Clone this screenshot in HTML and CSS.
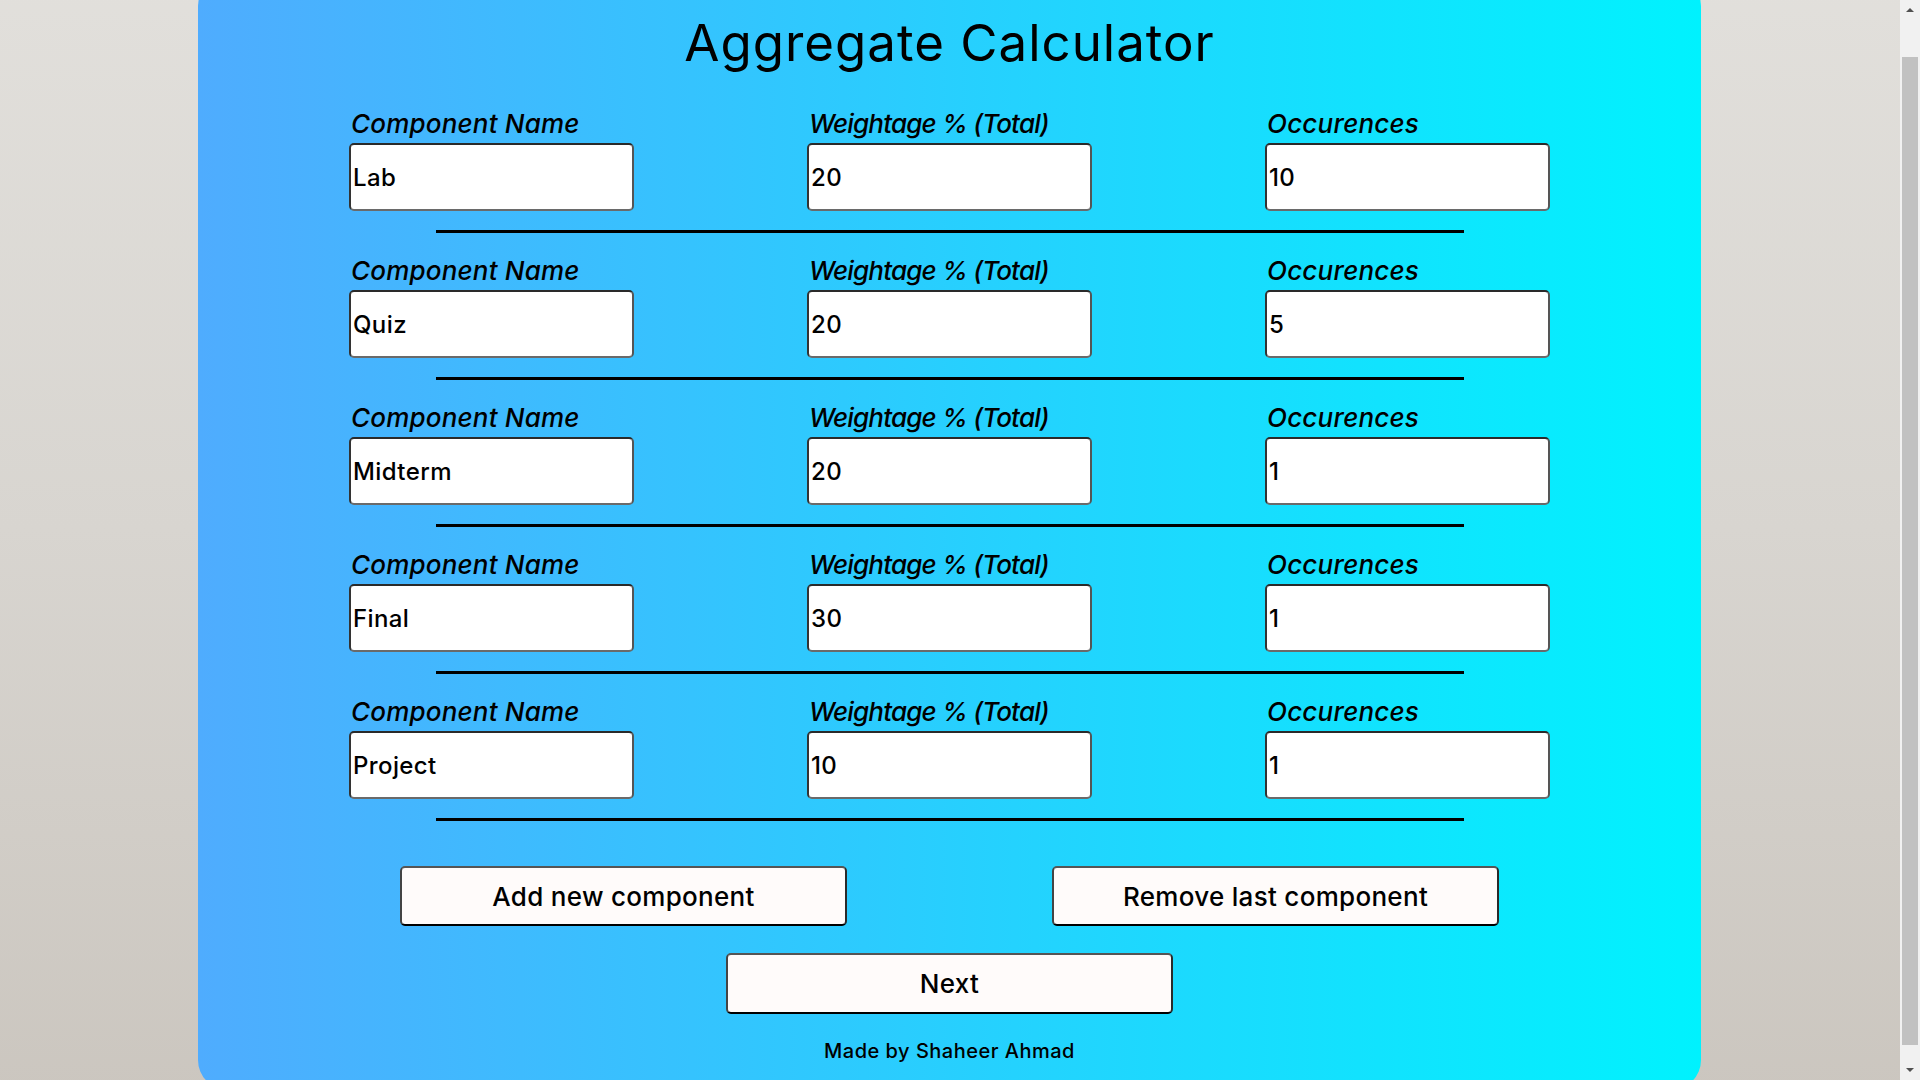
FILE: index.html
```html
<!DOCTYPE html>
<html lang="en">
<head>
<meta charset="utf-8">
<title>Aggregate Calculator</title>
<link rel="stylesheet" href="styles.css">
</head>
<body>
<main class="card">
  <h1 class="title">Aggregate Calculator</h1>

  <section class="component">
    <div class="fields">
      <div class="field"><label class="label">Component Name</label><input class="input" type="text" value="Lab"></div>
      <div class="field"><label class="label label-tight">Weightage % (Total)</label><input class="input" type="text" value="20"></div>
      <div class="field"><label class="label">Occurences</label><input class="input" type="text" value="10"></div>
    </div>
    <hr class="sep">
  </section>

  <section class="component">
    <div class="fields">
      <div class="field"><label class="label">Component Name</label><input class="input" type="text" value="Quiz"></div>
      <div class="field"><label class="label label-tight">Weightage % (Total)</label><input class="input" type="text" value="20"></div>
      <div class="field"><label class="label">Occurences</label><input class="input" type="text" value="5"></div>
    </div>
    <hr class="sep">
  </section>

  <section class="component">
    <div class="fields">
      <div class="field"><label class="label">Component Name</label><input class="input" type="text" value="Midterm"></div>
      <div class="field"><label class="label label-tight">Weightage % (Total)</label><input class="input" type="text" value="20"></div>
      <div class="field"><label class="label">Occurences</label><input class="input" type="text" value="1"></div>
    </div>
    <hr class="sep">
  </section>

  <section class="component">
    <div class="fields">
      <div class="field"><label class="label">Component Name</label><input class="input" type="text" value="Final"></div>
      <div class="field"><label class="label label-tight">Weightage % (Total)</label><input class="input" type="text" value="30"></div>
      <div class="field"><label class="label">Occurences</label><input class="input" type="text" value="1"></div>
    </div>
    <hr class="sep">
  </section>

  <section class="component">
    <div class="fields">
      <div class="field"><label class="label">Component Name</label><input class="input" type="text" value="Project"></div>
      <div class="field"><label class="label label-tight">Weightage % (Total)</label><input class="input" type="text" value="10"></div>
      <div class="field"><label class="label">Occurences</label><input class="input" type="text" value="1"></div>
    </div>
    <hr class="sep">
  </section>

  <div class="actions">
    <button class="btn" type="button">Add new component</button>
    <button class="btn" type="button">Remove last component</button>
  </div>
  <div class="next-row">
    <button class="btn btn-next" type="button">Next</button>
  </div>
  <p class="footer">Made by Shaheer Ahmad</p>
</main>

<div class="scrollbar" aria-hidden="true">
  <span class="sb-arrow sb-up"></span>
  <span class="sb-thumb"></span>
  <span class="sb-arrow sb-down"></span>
</div>
<script src="script.js"></script>
</body>
</html>
```

FILE: styles.css
```css
html {
  background: linear-gradient(to bottom, #e2e0dc 0%, #d8d5d0 50%, #cbc6bf 100%);
  min-height: 100%;
}

body {
  margin: 0;
  font-family: "Inter", "Lato", "Liberation Sans", sans-serif;
  color: #000;
}

.card {
  width: 1503px;
  margin: 20px 0 10px 198px;
  box-sizing: border-box;
  padding: 36px 0 27px;
  background: linear-gradient(to right, #4facfe 0%, #00f2fe 100%);
  border-radius: 30px;
}

.title {
  margin: 0 0 35px;
  text-align: center;
  font-size: 51px;
  line-height: 62px;
  font-weight: 400;
  letter-spacing: 1px;
}

.fields {
  display: grid;
  grid-template-columns: repeat(3, 458px);
  justify-content: center;
}

.field {
  width: 285px;
  justify-self: center;
  display: flex;
  flex-direction: column;
}

.label {
  display: block;
  font-size: 26px;
  line-height: 30px;
  font-style: italic;
  font-weight: 500;
  letter-spacing: 0.2px;
  margin-left: 2px;
  white-space: nowrap;
}

.label-tight {
  letter-spacing: -0.8px;
}

.input {
  margin-top: 4px;
  box-sizing: border-box;
  width: 285px;
  height: 68px;
  padding: 0 2px;
  font-family: inherit;
  font-size: 24px;
  font-weight: 500;
  letter-spacing: 0.4px;
  color: #000;
  background: #fff;
  border: 2px solid;
  border-color: #2a2a2a #555 #6a6a6a #333;
  border-radius: 5px;
  outline: none;
}

.sep {
  width: 1028px;
  height: 3px;
  margin: 19px auto 23px;
  border: 0;
  background: #000;
}

.actions {
  display: flex;
  justify-content: center;
  gap: 205px;
  margin-top: 45px;
}

.btn {
  box-sizing: border-box;
  width: 447px;
  height: 60px;
  padding: 0;
  font-family: inherit;
  font-size: 26px;
  font-weight: 500;
  letter-spacing: 0.3px;
  color: #000;
  background: #fffbfa;
  border: 2px solid;
  border-color: #555 #2a2a2a #000 #444;
  border-radius: 5px;
  cursor: pointer;
}

.next-row {
  display: flex;
  justify-content: center;
  margin-top: 27px;
}

.btn-next {
  height: 61px;
}

.footer {
  margin: 25px 0 0;
  text-align: center;
  font-size: 20px;
  line-height: 24px;
  font-weight: 500;
  letter-spacing: 0.5px;
}

/* classic scrollbar look, drawn over the page edge */
.scrollbar {
  position: fixed;
  top: 0;
  right: 0;
  bottom: 0;
  width: 20px;
  background: #f1f1f1;
}

.sb-thumb {
  position: absolute;
  left: 2px;
  right: 2px;
  top: 57px;
  bottom: 35px;
  background: #c1c1c1;
}

.sb-arrow {
  position: absolute;
  left: 6px;
  width: 0;
  height: 0;
  border-left: 4px solid transparent;
  border-right: 4px solid transparent;
}

.sb-up {
  top: 8px;
  border-bottom: 4px solid #505050;
}

.sb-down {
  bottom: 8px;
  border-top: 4px solid #505050;
}
```

FILE: script.js
```js
window.addEventListener('load', function () {
  window.scrollTo(0, 44);
});
window.scrollTo(0, 44);
```
